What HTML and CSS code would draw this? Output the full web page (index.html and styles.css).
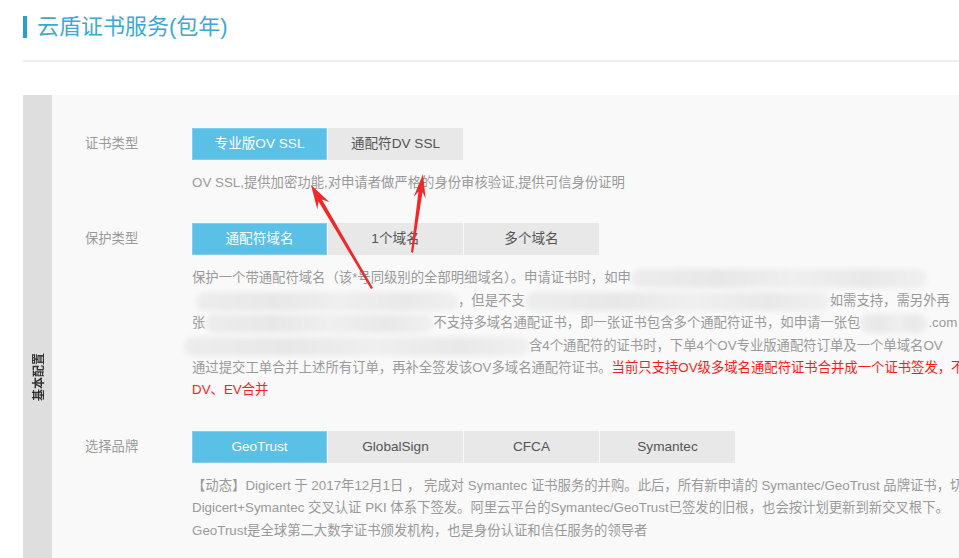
FILE: index.html
```html
<!DOCTYPE html>
<html lang="zh-CN">
  <head>
    <meta charset="UTF-8" />
    <meta name="viewport" content="width=device-width, initial-scale=1.0" />
    <title>云盾证书服务(包年)</title>
    <link rel="stylesheet" href="styles.css">
  </head>
  <body>
    <div class="page">
      <h1 class="title">云盾证书服务(包年)</h1>
      <div class="divider"></div>

      <div class="panel">
        <div class="side"><span class="side-text">基本配置</span></div>

        <div class="main">
          <!-- 证书类型 -->
          <div class="row">
            <div class="label">证书类型</div>
            <div class="field">
              <div class="opts">
                <span class="opt active">专业版OV SSL</span>
                <span class="opt">通配符DV SSL</span>
              </div>
              <div class="desc">
                <p>OV SSL,提供加密功能,对申请者做严格的身份审核验证,提供可信身份证明</p>
              </div>
            </div>
          </div>

          <!-- 保护类型 -->
          <div class="row">
            <div class="label">保护类型</div>
            <div class="field">
              <div class="opts">
                <span class="opt active">通配符域名</span>
                <span class="opt">1个域名</span>
                <span class="opt">多个域名</span>
              </div>
              <div class="desc">
                <p>保护一个带通配符域名（该*号同级别的全部明细域名）。申请证书时，如申<span class="blur w1"></span></p>
                <p><span class="blur w2"></span>，但是不支<span class="blur w3"></span>如需支持，需另外再</p>
                <p>张<span class="blur w4"></span>不支持多域名通配证书，即一张证书包含多个通配符证书，如申请一张包<span class="blur w5"></span>.com</p>
                <p><span class="blur w6"></span>含4个通配符的证书时，下单4个OV专业版通配符订单及一个单域名OV</p>
                <p>通过提交工单合并上述所有订单，再补全签发该OV多域名通配符证书。<span class="warn">当前只支持OV级多域名通配符证书合并成一个证书签发，不</span></p>
                <p class="warn">DV、EV合并</p>
              </div>
            </div>
          </div>

          <!-- 选择品牌 -->
          <div class="row">
            <div class="label">选择品牌</div>
            <div class="field">
              <div class="opts">
                <span class="opt active">GeoTrust</span>
                <span class="opt">GlobalSign</span>
                <span class="opt">CFCA</span>
                <span class="opt">Symantec</span>
              </div>
              <div class="desc">
                <p>【动态】Digicert 于 2017年12月1日 ， 完成对 Symantec 证书服务的并购。此后，所有新申请的 Symantec/GeoTrust 品牌证书，切</p>
                <p>Digicert+Symantec 交叉认证 PKI 体系下签发。阿里云平台的Symantec/GeoTrust已签发的旧根，也会按计划更新到新交叉根下。</p>
                <p>GeoTrust是全球第二大数字证书颁发机构，也是身份认证和信任服务的领导者</p>
              </div>
            </div>
          </div>
        </div>
      </div>

      <!-- 标注箭头 -->
      <svg class="marks" width="959" height="558" viewBox="0 0 959 558">
        <polygon class="arrow" points="373,288 321.9,199.4 329.3,202 311,185 317.3,209.2 318.5,201.4 371,289" />
        <polygon class="arrow" points="413,253 422.5,192.1 425.6,198.6 423,174 413.6,197 418.5,191.5 411,252" />
      </svg>
    </div>
  </body>
</html>
```

FILE: styles.css
```css
* {
  margin: 0;
  padding: 0;
  box-sizing: border-box;
}

body {
  width: 959px;
  height: 558px;
  overflow: hidden;
  background: #fff;
  font-family: "Liberation Sans", "Noto Sans CJK SC", sans-serif;
}

.page {
  position: relative;
  padding: 16px 0 0 23px;
}

.title {
  height: 22px;
  line-height: 22px;
  padding-left: 10px;
  border-left: 4px solid #2a9fcf;
  font-size: 22px;
  font-weight: normal;
  color: #3ea7d4;
}

.divider {
  height: 2px;
  margin-top: 22px;
  background: #efefef;
}

.panel {
  display: flex;
  min-height: 600px;
  margin-top: 33px;
}

.side {
  width: 29px;
  flex-shrink: 0;
  display: flex;
  justify-content: center;
  align-items: flex-start;
  padding-top: 258px;
  background: #dedede;
}
.side-text {
  writing-mode: vertical-rl;
  text-orientation: sideways;
  transform: rotate(180deg);
  white-space: nowrap;
  font-size: 12px;
  font-weight: bold;
  color: #333;
}

.main {
  flex: 1;
  overflow: hidden;
  padding: 33px 0 0 33px;
  background: #f9f9f9;
}

.row {
  display: flex;
  margin-bottom: 29px;
}

.label {
  width: 107px;
  flex-shrink: 0;
  line-height: 32px;
  font-size: 13.3px;
  color: #999;
}

.field {
  flex: 1;
  min-width: 0;
}

.opts {
  display: flex;
  gap: 1px;
}
.opt {
  width: 135px;
  height: 32px;
  line-height: 32px;
  text-align: center;
  font-size: 13.6px;
  color: #555;
  background: #e8e8e8;
}
.opt.active {
  color: #fff;
  background: #5bc0e6;
  border: 1px solid #7fd0ee;
  line-height: 30px;
}

.desc {
  margin-top: 12px;
}
.desc p {
  white-space: nowrap;
  line-height: 22.4px;
  font-size: 13.35px;
  color: #999;
}
.warn,
.desc p.warn {
  color: #ff1a1a;
}

.blur {
  display: inline-block;
  height: 19px;
  vertical-align: middle;
  border-radius: 9px;
  background: linear-gradient(90deg, #ededed, #e8e8e8 30%, #efefef 55%, #e9e9e9 80%, #f0f0f0);
  filter: blur(2px);
}
.w1 { width: 296px; }
.w2 { width: 262px; margin-left: 4px; }
.w3 { width: 305px; }
.w4 { width: 228px; }
.w5 { width: 68px; }
.w6 { width: 345px; margin-left: -8px; }

.marks {
  position: absolute;
  left: 0;
  top: 0;
  pointer-events: none;
}
.arrow {
  fill: #f0282a;
}
```
